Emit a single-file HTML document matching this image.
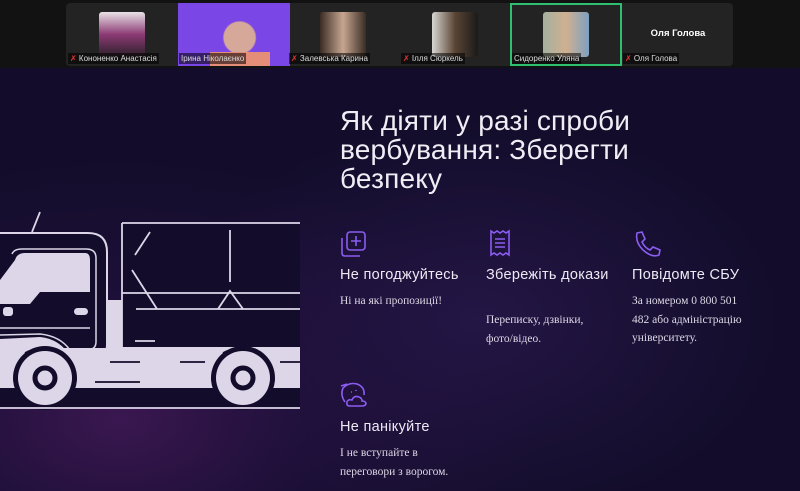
<!DOCTYPE html>
<html><head><meta charset="utf-8"><style>
*{margin:0;padding:0;box-sizing:border-box}
body{width:800px;height:491px;overflow:hidden;position:relative;font-family:"Liberation Sans",sans-serif;
background:radial-gradient(ellipse 420px 260px at 120px 420px,#3a1750 0%,rgba(40,18,70,0.5) 45%,rgba(0,0,0,0) 100%),radial-gradient(ellipse 300px 200px at 480px 320px,#241645 0%,rgba(0,0,0,0) 100%),#130d2b;}
.top{position:absolute;left:0;top:0;width:800px;height:68px;background:#121212}
.strip{position:absolute;left:66px;top:3px;width:667px;height:63px;background:#232323;border-radius:4px}
.ph{position:absolute;top:12px;width:46px;height:45px;border-radius:3px}
.nm{position:absolute;top:53px;font-size:8px;color:#ddd;background:rgba(0,0,0,.55);padding:0 2px;line-height:11px;white-space:nowrap}
.nm b{color:#e33;font-weight:normal}
h1{position:absolute;left:340px;top:106px;font-size:28px;line-height:29px;font-weight:normal;color:#f0edf5;letter-spacing:0.2px}
.h{position:absolute;font-size:14.5px;color:#eeeaf4;white-space:nowrap;letter-spacing:0.3px}
.p{position:absolute;font-family:"Liberation Serif",serif;font-size:11.5px;line-height:18.5px;color:#ddd8e6}
svg.ic{position:absolute;fill:none;stroke:#8b5cf0;stroke-width:1.6}
</style></head><body>
<div class="top"></div>
<div class="strip"></div>
<div class="ph" style="left:99px;background:linear-gradient(#e8e2e6,#8c3a74 50%,#2a2028)"></div>
<div style="position:absolute;left:178px;top:3px;width:112px;height:63px;background:radial-gradient(circle at 55% 55%,#d6a89a 0 22%,#7b46e6 24%)"></div>
<div style="position:absolute;left:210px;top:52px;width:60px;height:14px;background:#e48d78"></div>
<div class="ph" style="left:320px;background:linear-gradient(90deg,#3a2c24,#c7a691 50%,#3a2c24)"></div>
<div class="ph" style="left:432px;background:linear-gradient(90deg,#d8d6d2,#5a4535 50%,#1a1a1a)"></div>
<div style="position:absolute;left:510px;top:3px;width:112px;height:63px;border:2px solid #2fbf71"></div>
<div class="ph" style="left:543px;background:linear-gradient(90deg,#a4b0a0,#d0b090 50%,#7ea0c0)"></div>
<div style="position:absolute;left:624px;top:28px;width:108px;text-align:center;font-size:9.5px;font-weight:bold;color:#fff">Оля Голова</div>
<div class="nm" style="left:68px"><b>✗</b> Кононенко Анастасія</div>
<div class="nm" style="left:179px">Ірина Ніколаєнко</div>
<div class="nm" style="left:289px"><b>✗</b> Залевська Карина</div>
<div class="nm" style="left:401px"><b>✗</b> Ілля Сюркель</div>
<div class="nm" style="left:512px">Сидоренко Уляна</div>
<div class="nm" style="left:623px"><b>✗</b> Оля Голова</div>

<svg style="position:absolute;left:0;top:200px" width="310" height="220" viewBox="0 0 310 220">
<g fill="#ddd5e8" stroke="none">
<rect x="0" y="108" width="300" height="80"/>
<rect x="100" y="100" width="25" height="50"/>
</g>
<rect x="122" y="23" width="178" height="124" fill="#130d2b"/>
<path d="M-10 35 Q-10 33 0 33 L88 33 Q107 33 107 52 L107 145 Q107 158 92 158 L70 158 Q60 140 40 138 L0 140 L-10 140 Z" fill="#130d2b" stroke="#ddd5e8" stroke-width="2"/>
<path d="M12 54 Q14 49 22 49 L86 49 Q96 49 96 58 L96 142 Q96 150 86 150 L70 150 Q60 136 40 134 L0 135" fill="none" stroke="#ddd5e8" stroke-width="1.5"/>
<path d="M15 60 Q17 53 25 53 L85 53 Q90 53 90 60 L90 92 L40 92 L30 104 L0 104 L0 80 Z" fill="#ddd5e8"/>
<rect x="3" y="107" width="10" height="9" rx="3" fill="#ddd5e8"/><rect x="74" y="108" width="14" height="7" rx="3.5" fill="#ddd5e8"/>
<path d="M12 80 V96 M0 128 L90 128" stroke="#ddd5e8" stroke-width="1.5"/>
<rect x="0" y="188" width="300" height="20" fill="#130d2b"/>
<rect x="0" y="148" width="300" height="40" fill="#ddd5e8"/>
<circle cx="45" cy="178" r="32" fill="#130d2b"/><circle cx="243" cy="178" r="32" fill="#130d2b"/>
<circle cx="45" cy="178" r="27" fill="#ddd5e8"/><circle cx="243" cy="178" r="27" fill="#ddd5e8"/>
<g fill="none" stroke="#130d2b" stroke-width="5"><circle cx="45" cy="178" r="10"/><circle cx="243" cy="178" r="10"/></g>
<g fill="none" stroke="#130d2b" stroke-width="1.8"><path d="M110 162 H140 M95 182 H140 M180 162 H205 M280 162 H300 M25 153 Q35 148 45 149 M223 153 Q233 148 243 149"/></g>
<g fill="none" stroke="#ddd5e8" stroke-width="1.8">
<path d="M40 12 L32 32 M122 23 L300 23 M122 23 L122 147 M150 32 L135 55 M230 30 L230 82 M122 93 L300 93 M136 109 L300 109 M132 70 L157 109 M218 109 L230 91 L243 109 M0 208 L300 208 M135 141 H155"/>
</g>
</svg>

<h1>Як діяти у разі спроби<br>вербування: Зберегти<br>безпеку</h1>

<svg class="ic" style="left:339px;top:229px" width="30" height="30" viewBox="0 0 30 30"><rect x="8" y="3" width="18" height="18" rx="3"/><path d="M3 9 V24 Q3 27 6 27 H21 M17 7 V17 M12 12 H22"/></svg>
<svg class="ic" style="left:487px;top:228px" width="26" height="30" viewBox="0 0 26 30"><path d="M4 3 L7 5 L10 3 L13 5 L16 3 L19 5 L22 3 V27 L19 25 L16 27 L13 25 L10 27 L7 25 L4 27 Z M8 11 H18 M8 15 H18 M8 19 H18"/></svg>
<svg class="ic" style="left:632px;top:229px" width="30" height="30" viewBox="0 0 30 30"><path d="M5 4 L10 3 L13 10 L10 13 Q13 19 18 21 L21 18 L28 21 L27 26 Q20 29 11 21 Q3 13 5 4 Z"/></svg>
<svg class="ic" style="left:339px;top:381px" width="30" height="28" viewBox="0 0 30 28"><path d="M4 7 Q10 1 18 3 Q26 6 25 14 M4 7 Q1 14 6 21 M2 5 L8 3 M12 11 L13 11 M17 9 L17 10 M11 25 Q7 25 8 21 Q9 18 13 19 Q15 14 20 16 Q23 17 23 20 Q27 20 27 23 Q26 25 23 25 Z"/></svg>

<div class="h" style="left:340px;top:267px">Не погоджуйтесь</div>
<div class="h" style="left:486px;top:267px">Збережіть докази</div>
<div class="h" style="left:632px;top:267px">Повідомте СБУ</div>
<div class="p" style="left:340px;top:292px">Ні на які пропозиції!</div>
<div class="p" style="left:486px;top:311px">Переписку, дзвінки,<br>фото/відео.</div>
<div class="p" style="left:632px;top:292px">За номером 0 800 501<br>482 або адміністрацію<br>університету.</div>
<div class="h" style="left:340px;top:419px">Не панікуйте</div>
<div class="p" style="left:340px;top:444px">І не вступайте в<br>переговори з ворогом.</div>
</body></html>
